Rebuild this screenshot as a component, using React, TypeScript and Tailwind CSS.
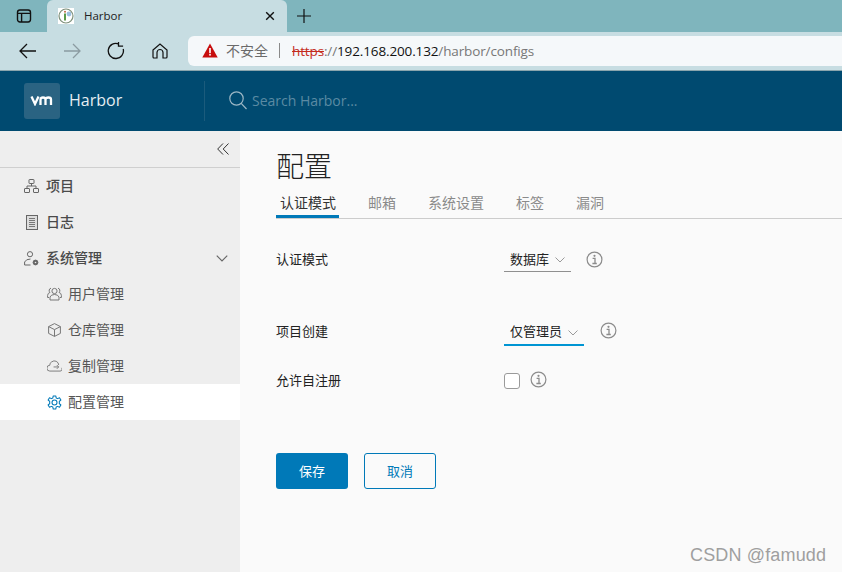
import React from "react";

const cjk = "font-['Noto_Sans_CJK_SC','Noto_Sans',sans-serif]";

function Chevron({ className = "" }: { className?: string }) {
  return (
    <svg width="10" height="6" viewBox="0 0 10 6" fill="none" stroke="currentColor" strokeWidth="1" className={className}>
      <path d="M0.5 0.5 L5 5 L9.5 0.5" />
    </svg>
  );
}

function Info({ className = "" }: { className?: string }) {
  return (
    <svg width="17" height="17" viewBox="0 0 17 17" fill="none" stroke="#8c8c8c" className={className}>
      <circle cx="8.5" cy="8.5" r="7.4" strokeWidth="1.2" />
      <circle cx="8.5" cy="4.8" r="1.1" fill="#8c8c8c" stroke="none" />
      <path d="M6.6 7.4 H9 V12.4 M6.4 12.5 H10.8" strokeWidth="1.3" />
    </svg>
  );
}

function NavItem({ icon, label, active, sub, strong, right }: { icon: React.ReactNode; label: string; active?: boolean; sub?: boolean; strong?: boolean; right?: React.ReactNode }) {
  return (
    <div className={`flex h-9 items-center ${sub ? "pl-[47px]" : "pl-[24px]"} ${active ? "bg-white" : ""}`}>
      <span className="flex w-[15px] justify-center">{icon}</span>
      <span className={`${sub ? "ml-[6px]" : "ml-[7px]"} pb-[2px] ${cjk} text-[14px] ${strong ? "font-medium text-[#4a4a4a]" : "text-[#565656]"}`}>{label}</span>
      {right}
    </div>
  );
}

function Tab({ label, active }: { label: string; active?: boolean }) {
  return (
    <div className={`mr-[25px] flex h-[31px] items-center border-b-[3px] pl-1 pr-[3px] pt-[3px] text-[14px] ${active ? "border-[#0079b8] text-[#333]" : "border-transparent text-[#8a8a8a]"}`}>
      {label}
    </div>
  );
}

export default function App() {
  return (
    <div className={`relative flex h-[572px] w-[842px] flex-col overflow-hidden bg-[#fafafa] ${cjk}`}>
      {/* tab strip */}
      <div className="flex h-8 bg-[#7fb5bd]">
        <div className="flex w-[47px] items-center justify-center">
          <svg width="16" height="16" viewBox="0 0 16 16" fill="none" stroke="#111" strokeWidth="1.4">
            <rect x="1.5" y="2" width="13" height="12" rx="2.4" />
            <path d="M1.5 5.4 H14.5 M5.6 5.4 V14" />
          </svg>
        </div>
        <div className="flex h-8 w-[240px] items-center rounded-t-[6px] bg-[#c7dde2] pl-[11px]">
          <svg width="16" height="16" viewBox="0 0 16 16">
            <rect width="16" height="16" fill="#fff" />
            <circle cx="8" cy="8" r="7" fill="#fff" stroke="#7d8f7a" strokeWidth="1.2" />
            <rect x="6" y="5.5" width="2" height="7" fill="#5a9a4a" />
            <circle cx="7" cy="3.8" r="1" fill="#c46a4a" />
            <circle cx="11" cy="6" r="2.4" fill="#9cc0e0" />
          </svg>
          <span className="ml-[10px] w-[40px] font-['Open_Sans',sans-serif] text-[11.5px] text-[#222]">Harbor</span>
          <svg width="10" height="10" viewBox="0 0 10 10" stroke="#111" strokeWidth="1.4" className="ml-[141px]">
            <path d="M1.2 1.2 L8.8 8.8 M8.8 1.2 L1.2 8.8" />
          </svg>
        </div>
        <div className="ml-[10px] flex items-center">
          <svg width="14" height="14" viewBox="0 0 14 14" stroke="#111" strokeWidth="1.2">
            <path d="M7 0 V14 M0 7 H14" />
          </svg>
        </div>
      </div>
      {/* toolbar */}
      <div className="flex h-[38.5px] items-center border-b border-[#8aa5ad] bg-[#c7dde2]">
        <svg width="18" height="16" viewBox="0 0 18 16" fill="none" stroke="#111" strokeWidth="1.3" className="ml-[19px]">
          <path d="M17 8 H1 M8 1 L1 8 L8 15" />
        </svg>
        <svg width="18" height="16" viewBox="0 0 18 16" fill="none" stroke="#8b9ba1" strokeWidth="1.3" className="ml-[26px]">
          <path d="M1 8 H17 M10 1 L17 8 L10 15" />
        </svg>
        <svg width="18" height="18" viewBox="0 0 18 18" fill="none" stroke="#111" strokeWidth="1.3" className="ml-[26px]">
          <path d="M11.5 1.8 A7.6 7.6 0 1 0 16.2 7" />
          <path d="M11 0 V4.6 H15.6" transform="translate(0.5 -0.5)" />
        </svg>
        <svg width="16" height="16" viewBox="0 0 16 16" fill="none" stroke="#111" strokeWidth="1.2" className="ml-[27px]">
          <path d="M1 7 L8 1 L15 7 V14 A1 1 0 0 1 14 15 H11 V9.5 A3 3 0 0 0 5 9.5 V15 H2 A1 1 0 0 1 1 14 Z" />
        </svg>
        <div className="ml-[20px] flex h-[30px] flex-1 items-center rounded-l-[6px] bg-[#f5f8fa] pl-[14px] text-[14px]">
          <svg width="16" height="15" viewBox="0 0 16 15">
            <path d="M8 0.5 L15.7 14.5 H0.3 Z" fill="#c70e0e" />
            <rect x="7.2" y="5" width="1.6" height="5.2" fill="#fff" />
            <rect x="7.2" y="11" width="1.6" height="1.6" fill="#fff" />
          </svg>
          <span className="ml-[8px] text-[14px] text-[#6a6a6a]">不安全</span>
          <span className="ml-[11px] h-[15px] w-px bg-[#8a8a8a]" />
          <span className="ml-[12px] font-['Open_Sans',sans-serif] text-[13.5px] tracking-[-0.13px] text-[#777]">
            <span className="text-[#c42b1c] line-through">https</span>
            ://
            <span className="text-[#111]">192.168.200.132</span>
            /harbor/configs
          </span>
        </div>
      </div>
      {/* harbor header */}
      <div className="flex h-[60.5px] items-center bg-[#004a70]">
        <div className="ml-[24px] flex h-9 w-9 items-center justify-center rounded-[3px] bg-[#2a6382]">
          <svg width="26" height="11" viewBox="0 0 26 11" fill="none" stroke="#fff" strokeWidth="2.3">
            <path d="M1 1.5 L4.5 9 L8 1.5 M10 10 V4.5 Q10 2.5 12.5 2.5 Q15 2.5 15 4.5 V10 M15 4.5 Q15 2.5 18 2.5 Q20.5 2.5 20.5 4.5 V10" transform="translate(1.5 0)" />
          </svg>
        </div>
        <span className="ml-[9px] w-[54px] pb-[2px] font-['Open_Sans',sans-serif] text-[16px] text-[#e6eef2]">Harbor</span>
        <div className="ml-[81px] h-10 w-px bg-[#1b5b7c]" />
        <svg width="18" height="19" viewBox="0 0 18 19" fill="none" stroke="#9db8c6" strokeWidth="1.2" className="ml-6">
          <circle cx="7.5" cy="7.5" r="6.7" />
          <path d="M12.2 12.4 L17.5 18" />
        </svg>
        <span className="ml-[5px] font-['Open_Sans',sans-serif] text-[14px] text-[#5b8aa3]">Search Harbor...</span>
      </div>
      {/* body */}
      <div className="flex flex-1">
        <aside className="w-[240px] bg-[#eeeeee]">
          <div className="flex h-[37px] items-center justify-end border-b border-[#cfcfcf] pr-[11px]">
            <svg width="12" height="12" viewBox="0 0 12 12" fill="none" stroke="#333" strokeWidth="1">
              <path d="M6 0.5 L0.7 6 L6 11.5 M11.5 0.5 L6.2 6 L11.5 11.5" />
            </svg>
          </div>
          <NavItem
            strong
            label="项目"
            icon={
              <svg width="15" height="14" viewBox="0 0 15 14" fill="none" stroke="#666" strokeWidth="1">
                <rect x="5" y="0.5" width="5" height="4" rx="0.5" />
                <rect x="0.5" y="9.5" width="5" height="4" rx="0.5" />
                <rect x="9.5" y="9.5" width="5" height="4" rx="0.5" />
                <path d="M7.5 4.5 V7 M3 9.5 V7 H12 V9.5" />
              </svg>
            }
          />
          <NavItem
            strong
            label="日志"
            icon={
              <svg width="12" height="15" viewBox="0 0 12 15" fill="none" stroke="#666" strokeWidth="1">
                <rect x="0.5" y="0.5" width="11" height="14" fill="#ddd" />
                <path d="M3 3.5 H9 M3 5.5 H9 M3 7.5 H9 M3 9.5 H9 M3 11.5 H9" stroke="#777" />
              </svg>
            }
          />
          <NavItem
            strong
            label="系统管理"
            icon={
              <svg width="15" height="15" viewBox="0 0 15 15" fill="none" stroke="#666" strokeWidth="1">
                <circle cx="6" cy="3.2" r="2.6" />
                <path d="M0.6 14 V11 Q2 8 6.5 8" />
                <path d="M0.6 14 H6.5" />
                <circle cx="11.5" cy="11.5" r="2.4" fill="#666" />
                <circle cx="11.5" cy="11.5" r="0.8" fill="#eee" stroke="none" />
              </svg>
            }
            right={<Chevron className="ml-auto mr-[12px] h-[7px] w-[12px] text-[#666]" />}
          />
          <NavItem
            sub
            label="用户管理"
            icon={
              <svg width="15" height="14" viewBox="0 0 15 14" fill="none" stroke="#777" strokeWidth="1">
                <circle cx="7.5" cy="4" r="2.6" />
                <path d="M3 13 V10 Q4 7.5 7.5 7.5 Q11 7.5 12 10 V13 Z" />
                <path d="M4 1.2 A2.4 2.4 0 0 0 3 5.4 Q0.8 6 0.6 8.4 V10.5 H2 M11 1.2 A2.4 2.4 0 0 1 12 5.4 Q14.2 6 14.4 8.4 V10.5 H13" />
              </svg>
            }
          />
          <NavItem
            sub
            label="仓库管理"
            icon={
              <svg width="13" height="14" viewBox="0 0 13 14" fill="none" stroke="#777" strokeWidth="1">
                <path d="M6.5 0.6 L12.4 3.6 V10.4 L6.5 13.4 L0.6 10.4 V3.6 Z M0.6 3.6 L6.5 6.6 L12.4 3.6 M6.5 6.6 V13.4" />
              </svg>
            }
          />
          <NavItem
            sub
            label="复制管理"
            icon={
              <svg width="16" height="12" viewBox="0 0 16 12" fill="none" stroke="#777" strokeWidth="1">
                <path d="M12.5 5 A4.6 4.6 0 0 0 5 1.6 A3.6 3.6 0 0 0 3 5.2 A3 3 0 0 0 3 11.4 H14 A2 2 0 0 0 15.5 8" />
                <path d="M7 7 H12 M10.5 5 L12.5 7 L10.5 9" />
              </svg>
            }
          />
          <NavItem
            sub
            active
            label="配置管理"
            icon={
              <svg width="15" height="15" viewBox="0 0 24 24" fill="none" stroke="#0079b8" strokeWidth="1.7">
                <circle cx="12" cy="12" r="4" />
                <path d="M10 1.5 H14 L14.7 4.7 L17 5.8 L20 4.4 L22.2 8 L19.7 10.2 V13.8 L22.2 16 L20 19.6 L17 18.2 L14.7 19.3 L14 22.5 H10 L9.3 19.3 L7 18.2 L4 19.6 L1.8 16 L4.3 13.8 V10.2 L1.8 8 L4 4.4 L7 5.8 L9.3 4.7 Z" strokeLinejoin="round" />
              </svg>
            }
          />
        </aside>
        <main className="flex-1 pt-[14px]">
          <h1 className="pl-[36px] text-[28px] font-light leading-[40px] text-[#222]">配置</h1>
          <div className="ml-[36px] mt-[2px] flex border-b border-[#cccccc]">
            <Tab label="认证模式" active />
            <Tab label="邮箱" />
            <Tab label="系统设置" />
            <Tab label="标签" />
            <Tab label="漏洞" />
          </div>
          <div className="pl-[36px] text-[13px] text-[#222]">
            <div className="mt-[26px] flex h-[32px] items-start">
              <span className="mt-[4px] w-[228px]">认证模式</span>
              <div className="flex h-[27px] w-[67px] items-center border-b border-[#8f8f8f] pl-[6px] pt-[1px]">
                数据库
                <Chevron className="ml-[6px] mt-[2px] text-[#9a9a9a]" />
              </div>
              <Info className="ml-[15px] mt-[6px]" />
            </div>
            <div className="mt-[41px] flex h-[32px] items-start">
              <span className="mt-[3px] w-[228px]">项目创建</span>
              <div className="flex h-[28px] w-[80px] items-center border-b-2 border-[#0095d3] pl-[6px]">
                仅管理员
                <Chevron className="ml-[6px] mt-[3px] text-[#9a9a9a]" />
              </div>
              <Info className="ml-4 mt-[4px]" />
            </div>
            <div className="mt-[20px] flex h-[24px] items-start">
              <span className="w-[228px]">允许自注册</span>
              <div className="mt-[3px] h-4 w-4 rounded-[3px] border border-[#9a9a9a] bg-white" />
              <Info className="ml-[10px] mt-[1px]" />
            </div>
            <div className="mt-[59px] flex">
              <button className="h-9 w-[72px] rounded-[3px] bg-[#0079b8] text-[13px] text-white">保存</button>
              <button className="ml-4 h-9 w-[72px] rounded-[3px] border border-[#0079b8] text-[13px] text-[#0079b8]">取消</button>
            </div>
          </div>
        </main>
      </div>
      <span className="absolute left-[690px] top-[542px] font-['Liberation_Sans',sans-serif] text-[18px] tracking-[0.15px] text-[#9f9f9f]">CSDN @famudd</span>
    </div>
  );
}
